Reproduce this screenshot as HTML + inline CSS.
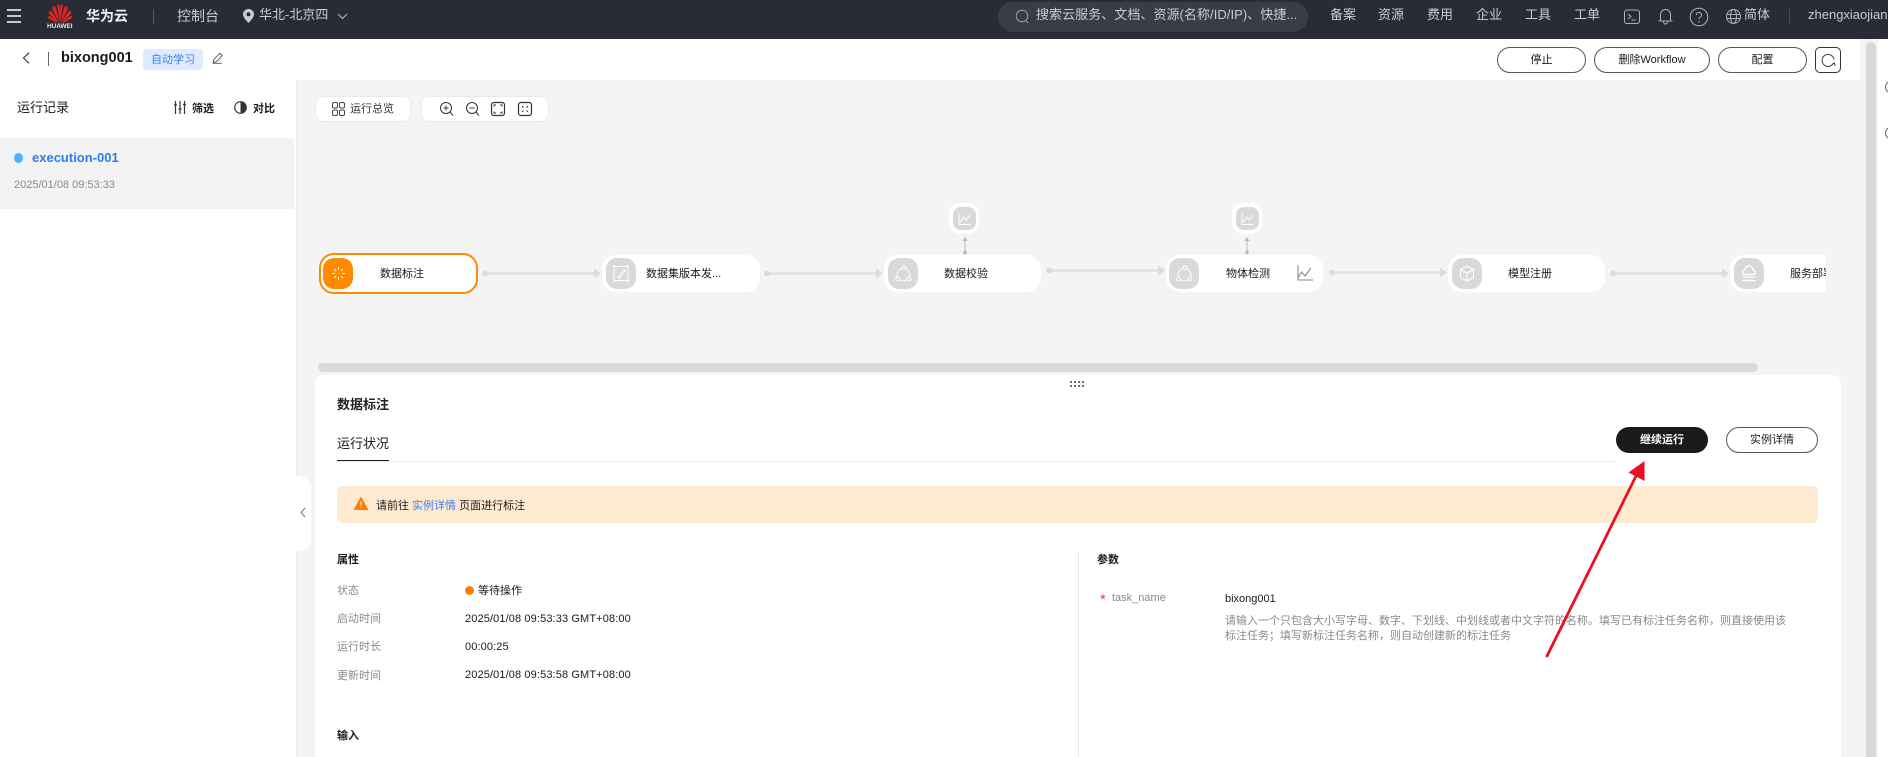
<!DOCTYPE html>
<html lang="zh-CN">
<head>
<meta charset="utf-8">
<title>bixong001</title>
<style>
*{box-sizing:border-box}
html,body{margin:0;padding:0;width:1888px;height:757px;overflow:hidden;background:#fff;font-family:"Liberation Sans","Noto Sans CJK SC",sans-serif;color:#1a1a1a}
.a{position:absolute}
.t{position:absolute;white-space:nowrap;line-height:16px;transform:translateY(-8px)}
.nav{font-size:13px;color:#c9ccd2;top:15px}
.btn{position:absolute;top:47px;height:26px;border:1px solid #555;border-radius:13px;background:#fff;font-size:11px;line-height:24px;text-align:center;color:#1a1a1a}
.tool{position:absolute;top:96px;height:26px;background:#fff;border:1px solid #eaeaea;border-radius:8px}
.node{position:absolute;top:255px;height:37px;width:158px;background:#fff;border-radius:14px}
.ic{position:absolute;top:258px;width:30px;height:31px;background:#d9d9d9;border-radius:11px}
.nt{font-size:11px;top:274px;color:#1a1a1a}
.lb{font-size:11px;color:#8a8a8a;left:337px}
.val{font-size:11px;color:#1a1a1a;left:465px;letter-spacing:.12px}
.h{font-size:11px;font-weight:bold;color:#1a1a1a}
</style>
</head>
<body>
<div class="a" style="left:0;top:0;width:1888px;height:757px;background:#fff"></div>

<!-- top bar -->
<div class="a" style="left:0;top:0;width:1888px;height:39px;background:#292c35"></div>
<div class="a" style="left:7px;top:9px;width:14px;height:2px;background:#c5c8ce"></div>
<div class="a" style="left:7px;top:15px;width:14px;height:2px;background:#c5c8ce"></div>
<div class="a" style="left:7px;top:21px;width:14px;height:2px;background:#c5c8ce"></div>
<svg class="a" style="left:47px;top:3px" width="26" height="22" viewBox="0 0 26 22">
<g fill="#e3231f">
<path d="M13 20 L10.2 3 Q11 1 12 1 Q13.5 6 13 20Z"/>
<path d="M13 20 L15.8 3 Q15 1 14 1 Q12.5 6 13 20Z"/>
<path d="M12 20 L5 5 Q6.5 3 8 3 Q11 10 12 20Z"/>
<path d="M14 20 L21 5 Q19.5 3 18 3 Q15 10 14 20Z"/>
<path d="M11 20 L1.5 10 Q2 8 3.5 7.5 Q8 12 11 20Z"/>
<path d="M15 20 L24.5 10 Q24 8 22.5 7.5 Q18 12 15 20Z"/>
<path d="M10.5 20.5 L1 15 Q1 13.5 1.5 12.5 Q7 15 10.5 20.5Z"/>
<path d="M15.5 20.5 L25 15 Q25 13.5 24.500 12.5 Q19 15 15.500 20.500Z"/>
</g></svg>
<div class="t" style="left:47px;top:27px;font-size:6.5px;line-height:8px;transform:translateY(-4px);color:#e8e8e8;font-weight:bold;letter-spacing:-.1px">HUAWEI</div>
<div class="t" style="left:86px;top:16px;font-size:14px;font-weight:bold;color:#f2f2f2">华为云</div>
<div class="a" style="left:153px;top:9px;width:1px;height:15px;background:#555963"></div>
<div class="t" style="left:177px;top:16px;font-size:14px;color:#c9ccd2">控制台</div>
<svg class="a" style="left:243px;top:9px" width="11" height="14" viewBox="0 0 11 14"><path d="M5.500 0C2.500 0 0 2.300 0 5.300 0 9 5.500 14 5.500 14S11 9 11 5.300C11 2.300 8.500 0 5.500 0Z" fill="#c9ccd2"/><circle cx="5.500" cy="5.200" r="2" fill="#292c35"/></svg>
<div class="t" style="left:259px;top:15px;font-size:13px;color:#c9ccd2">华北-北京四</div>
<svg class="a" style="left:337px;top:13px" width="11" height="7" viewBox="0 0 11 7"><path d="M1 1l4.500 4.500L10 1" fill="none" stroke="#b5b8be" stroke-width="1.100"/></svg>

<div class="a" style="left:998px;top:2px;width:310px;height:30px;border-radius:15px;background:#3a3d47"></div>
<svg class="a" style="left:1015px;top:9px" width="15" height="16" viewBox="0 0 15 16"><circle cx="7" cy="7" r="5.800" fill="none" stroke="#9da0a8" stroke-width="1"/><path d="M11 11.500l2 2.500" stroke="#9da0a8" stroke-width="1"/></svg>
<div class="t" style="left:1036px;top:15px;font-size:13px;color:#c9ccd2;letter-spacing:.05px;width:264px;overflow:hidden">搜索云服务、文档、资源(名称/ID/IP)、快捷...</div>
<div class="t nav" style="left:1330px">备案</div>
<div class="t nav" style="left:1378px">资源</div>
<div class="t nav" style="left:1427px">费用</div>
<div class="t nav" style="left:1476px">企业</div>
<div class="t nav" style="left:1525px">工具</div>
<div class="t nav" style="left:1574px">工单</div>
<svg class="a" style="left:1623px;top:8px" width="18" height="18" viewBox="0 0 18 18" fill="none" stroke="#aeb1b8" stroke-width="1"><rect x="1.500" y="2" width="15" height="13.500" rx="2.500"/><path d="M5 6l3 2.500-3 2.500M8.500 12h4"/></svg>
<svg class="a" style="left:1657px;top:7px" width="17" height="19" viewBox="0 0 17 19" fill="none" stroke="#aeb1b8" stroke-width="1"><path d="M3.500 14V7.500a5 5 0 0 1 10 0V14M1.500 14h14M6.500 14.500a2 2.500 0 0 0 4 0"/></svg>
<svg class="a" style="left:1689px;top:7px" width="20" height="20" viewBox="0 0 20 20" fill="none" stroke="#aeb1b8" stroke-width="1"><circle cx="10" cy="10" r="8.800"/><path d="M7.500 8a2.500 2.500 0 1 1 3.800 2c-1 .7-1.300 1.200-1.300 2.200M10 14v1.500"/></svg>
<svg class="a" style="left:1726px;top:9px" width="15" height="15" viewBox="0 0 15 15" fill="none" stroke="#aeb1b8" stroke-width="1"><circle cx="7.500" cy="7.500" r="7"/><ellipse cx="7.500" cy="7.500" rx="3" ry="7"/><path d="M1 5.500h13M1 9.500h13"/></svg>
<div class="t nav" style="left:1744px">简体</div>
<div class="a" style="left:1789px;top:9px;width:1px;height:15px;background:#454852"></div>
<div class="t nav" style="left:1808px">zhengxiaojian</div>

<!-- second bar -->
<div class="a" style="left:0;top:39px;width:1860px;height:41px;background:#fff"></div>
<svg class="a" style="left:21px;top:52px" width="10" height="12" viewBox="0 0 10 12"><path d="M8 .8L2.500 6 8 11.200" fill="none" stroke="#333" stroke-width="1.100"/></svg>
<div class="a" style="left:48px;top:52px;width:1px;height:14px;background:#666"></div>
<div class="t" style="left:61px;top:58px;font-size:14.500px;font-weight:bold;color:#1a1a1a">bixong001</div>
<div class="a" style="left:143px;top:49px;width:60px;height:21px;border-radius:4px;background:#deebfd"></div>
<div class="t" style="left:151px;top:59.500px;font-size:11px;color:#3d7fec">自动学习</div>
<svg class="a" style="left:212px;top:52px" width="12" height="12" viewBox="0 0 12 12" fill="none" stroke="#555" stroke-width=".9"><path d="M7.800 1.200l2.500 2.300-6 6.300-3.200.8.700-3.100zM.8 11.300h9"/></svg>

<div class="btn" style="left:1497px;width:89px">停止</div>
<div class="btn" style="left:1594px;width:116px">删除Workflow</div>
<div class="btn" style="left:1718px;width:89px">配置</div>
<div class="btn" style="left:1815px;width:26px;border-radius:5px;border-color:#333"></div>
<svg class="a" style="left:1821px;top:53px" width="15" height="15" viewBox="0 0 15 15" fill="none" stroke="#444" stroke-width="1"><path d="M12.500 10A6 6 0 1 1 13 6.500"/><path d="M11 11.500l2.500-1.500.5 2.800"/></svg>

<!-- main -->
<div class="a" style="left:296px;top:80px;width:1564px;height:677px;background:#f4f4f4"></div>
<div class="a" style="left:0;top:80px;width:296px;height:677px;background:#fff;box-shadow:1px 0 2px rgba(0,0,0,.05)"></div>
<div class="a" style="left:1860px;top:39px;width:18px;height:718px;background:#f4f4f4"></div>
<div class="a" style="left:1866px;top:42px;width:9.500px;height:715px;background:#d9d9d9;border-radius:5px 5px 0 0"></div>
<div class="a" style="left:1878px;top:39px;width:10px;height:718px;background:#fff"></div>
<div class="a" style="left:1885px;top:81px;width:10px;height:12px;border:1px solid #666;border-radius:50%"></div>
<div class="a" style="left:1885px;top:127px;width:10px;height:12px;border:1px solid #666;border-radius:50%"></div>

<!-- sidebar -->
<div class="t" style="left:17px;top:108px;font-size:13px;color:#1a1a1a">运行记录</div>
<svg class="a" style="left:174px;top:101px" width="12" height="13" viewBox="0 0 12 13" fill="none" stroke="#333" stroke-width="1.200"><path d="M1.500 0v13M6 0v13M10.500 0v13M0 4h3M4.500 8h3M9 3.500h3"/></svg>
<div class="t" style="left:192px;top:108.500px;font-size:11px;font-weight:bold">筛选</div>
<svg class="a" style="left:234px;top:101px" width="13" height="13" viewBox="0 0 13 13"><circle cx="6.500" cy="6.500" r="5.800" fill="none" stroke="#333" stroke-width="1.100"/><path d="M6.500 .7a5.800 5.800 0 0 1 0 11.600z" fill="#333"/></svg>
<div class="t" style="left:253px;top:108.500px;font-size:11px;font-weight:bold">对比</div>
<div class="a" style="left:0;top:138px;width:294px;height:71px;background:#f3f3f3"></div>
<div class="a" style="left:14px;top:153px;width:9px;height:10px;border-radius:50%;background:#4db1ff"></div>
<div class="t" style="left:32px;top:158px;font-size:13px;font-weight:bold;color:#2b7cf0">execution-001</div>
<div class="t" style="left:14px;top:185px;font-size:11px;color:#8a8a8a">2025/01/08 09:53:33</div>

<!-- toolbar -->
<div class="tool" style="left:315px;width:96px"></div>
<svg class="a" style="left:332px;top:102px" width="13" height="14" viewBox="0 0 13 14" fill="none" stroke="#444" stroke-width="1"><rect x=".5" y=".5" width="5" height="5.500" rx="1.500"/><rect x="7.500" y=".5" width="5" height="5.500" rx="1.500"/><rect x=".5" y="8" width="5" height="5.500" rx="1.500"/><rect x="7.500" y="8" width="5" height="5.500" rx="1.500"/></svg>
<div class="t" style="left:350px;top:108.500px;font-size:11px;color:#333">运行总览</div>
<div class="tool" style="left:421px;width:128px"></div>
<svg class="a" style="left:439px;top:101px" width="96" height="16" viewBox="0 0 96 16" fill="none" stroke="#333" stroke-width="1">
<circle cx="7" cy="7" r="5.500"/><path d="M11 11l3 3.500M7 4.500v5M4.500 7h5"/>
<circle cx="33" cy="7" r="5.500"/><path d="M37 11l3 3.500M30.500 7h5"/>
<rect x="52.500" y="1.500" width="13" height="13" rx="2.500" stroke-width="1.200"/><path d="M55 5.500V4h2M61 4h2v1.500M55 10.500V12h2M61 12h2v-1.500"/>
<rect x="79.500" y="1.500" width="13" height="13" rx="2.500" stroke-width="1.200"/><path d="M83 5l1.500 1.500M89 5l-1.500 1.500M83 11l1.500-1.500M89 11l-1.500-1.500"/>
</svg>

<!-- flow nodes -->
<div class="node" style="left:319px;top:253px;width:159px;height:41px;border:2px solid #ff8a00;border-radius:15px;box-shadow:inset 0 0 0 1px #fff"></div>
<div class="ic" style="left:323px;background:#ff8a00"></div>
<svg class="a" style="left:331px;top:266px" width="15" height="15" viewBox="0 0 15 15" stroke="#fff" stroke-width="1" fill="none"><path d="M7.500 1v3M7.500 11v3M1 7.500h3M11 7.500h3M3 3l2 2M10 10l2 2M12 3l-2 2M5 10l-2 2"/></svg>
<div class="t nt" style="left:380px">数据标注</div>

<div class="node" style="left:602px"></div>
<div class="ic" style="left:606px"></div>
<svg class="a" style="left:612px;top:264px" width="18" height="19" viewBox="0 0 18 19" fill="none" stroke="#fff" stroke-width="1"><rect x="2" y="2.500" width="14" height="14"/><path d="M6 13l6-7.500 1.500 1.200-6 7.500zM1 1.500h2M15 1.500h2M1 17.500h2M15 17.500h2"/></svg>
<div class="t nt" style="left:646px">数据集版本发...</div>

<div class="node" style="left:884px;width:157px"></div>
<div class="ic" style="left:888px"></div>
<svg class="a" style="left:894px;top:264px" width="18" height="19" viewBox="0 0 18 19" fill="none" stroke="#fff" stroke-width="1"><circle cx="10" cy="3.500" r="1.800"/><circle cx="3.500" cy="15" r="1.800"/><circle cx="15" cy="15" r="1.800"/><path d="M8.300 4.500A7.500 7.500 0 0 0 3 13.200M5.400 15.800A7.500 7.500 0 0 0 13.100 15.800M11.700 4.500A7.500 7.500 0 0 1 15.500 13.200"/></svg>
<div class="t nt" style="left:944px">数据校验</div>

<div class="node" style="left:1166px;width:157px"></div>
<div class="ic" style="left:1169px"></div>
<svg class="a" style="left:1175px;top:264px" width="18" height="19" viewBox="0 0 18 19" fill="none" stroke="#fff" stroke-width="1"><circle cx="10" cy="3.500" r="1.800"/><circle cx="3.500" cy="15" r="1.800"/><circle cx="15" cy="15" r="1.800"/><path d="M8.300 4.500A7.500 7.500 0 0 0 3 13.200M5.400 15.800A7.500 7.500 0 0 0 13.100 15.800M11.700 4.500A7.500 7.500 0 0 1 15.500 13.200"/></svg>
<div class="t nt" style="left:1226px">物体检测</div>
<svg class="a" style="left:1297px;top:265px" width="16" height="16" viewBox="0 0 16 16" fill="none" stroke="#888" stroke-width="1.100"><path d="M1 .5v14.500h15M1 13l3.500-6 3.500 4L14 3"/></svg>

<div class="node" style="left:1448px;width:157px"></div>
<div class="ic" style="left:1452px"></div>
<svg class="a" style="left:1458px;top:264px" width="18" height="19" viewBox="0 0 18 19" fill="none" stroke="#fff" stroke-width="1"><path d="M9 2l6.500 3.500v8L9 17l-6.500-3.500v-8zM2.500 5.500L9 9l6.500-3.500M9 9v8"/></svg>
<div class="t nt" style="left:1508px">模型注册</div>

<div class="a" style="left:1730px;top:255px;width:96px;height:37px;overflow:hidden">
<div class="a" style="left:0;top:0;width:158px;height:37px;background:#fff;border-radius:14px"></div>
<div class="a" style="left:4px;top:3px;width:30px;height:31px;background:#d9d9d9;border-radius:11px"></div>
<svg class="a" style="left:10px;top:9px" width="18" height="19" viewBox="0 0 18 19" fill="none" stroke="#fff" stroke-width="1"><path d="M4 10.500a2.500 2.500 0 0 1 1-4.800 4 4 0 0 1 8 .3 2.400 2.400 0 0 1 1 4.500zM2 13h14M2 16.500h14" stroke-width="1.200"/></svg>
<div class="t nt" style="left:60px;top:19px">服务部署</div>
</div>

<!-- connectors -->
<svg class="a" style="left:296px;top:195px" width="1564" height="100" viewBox="296 195 1564 100">
<g stroke="#e0e0e0" stroke-width="2.500" fill="#dcdcdc">
<path d="M485 273.500H596"/><circle cx="485" cy="273.500" r="3" stroke="none"/><path d="M594 268.500l7 5-7 5z" stroke="none"/>
<path d="M767 273.500H878"/><circle cx="767" cy="273.500" r="3" stroke="none"/><path d="M876 268.500l7 5-7 5z" stroke="none"/>
<path d="M1049 270.500H1160"/><circle cx="1049" cy="270.500" r="3" stroke="none"/><path d="M1158 265.500l7 5-7 5z" stroke="none"/>
<path d="M1332 272.500H1442"/><circle cx="1332" cy="272.500" r="3" stroke="none"/><path d="M1440 267.500l7 5-7 5z" stroke="none"/>
<path d="M1613 273.500H1724"/><circle cx="1613" cy="273.500" r="3" stroke="none"/><path d="M1722 268.500l7 5-7 5z" stroke="none"/>
</g>
<g stroke="#c4c6cc" stroke-width="1.300" fill="#b5b7be">
<path d="M965 240V253"/><path d="M965 237l-2.500 4h5z" stroke="none"/><circle cx="965" cy="252.500" r="1.800" stroke="none"/>
<path d="M1247 240V253"/><path d="M1247 237l-2.500 4h5z" stroke="none"/><circle cx="1247" cy="252.500" r="1.800" stroke="none"/>
</g>
</svg>

<!-- small nodes -->
<div class="a" style="left:949px;top:203px;width:30px;height:31px;background:#fff;border-radius:11px"></div>
<div class="a" style="left:953px;top:207px;width:23px;height:23px;background:#d9d9d9;border-radius:8px"></div>
<svg class="a" style="left:958px;top:212px" width="14" height="14" viewBox="0 0 14 14" fill="none" stroke="#fff" stroke-width="1"><path d="M1 1v11.500h12M2.500 10l3-5 2.500 3 4-5"/></svg>
<div class="a" style="left:1232px;top:203px;width:30px;height:31px;background:#fff;border-radius:11px"></div>
<div class="a" style="left:1236px;top:207px;width:23px;height:23px;background:#d9d9d9;border-radius:8px"></div>
<svg class="a" style="left:1241px;top:212px" width="14" height="14" viewBox="0 0 14 14" fill="none" stroke="#fff" stroke-width="1"><path d="M1 1v11.500h12M2.500 10l3-5 2.500 3 4-5"/></svg>

<!-- h scrollbar -->
<div class="a" style="left:318px;top:363px;width:1440px;height:9px;background:#d9d9d9;border-radius:5px"></div>

<!-- panel -->
<div class="a" style="left:315px;top:375px;width:1526px;height:382px;background:#fff;border-radius:8px 8px 0 0"></div>
<svg class="a" style="left:1070px;top:381px" width="15" height="7"><g fill="#6b6e76"><rect x="0" y="0" width="2" height="2"/><rect x="4" y="0" width="2" height="2"/><rect x="8" y="0" width="2" height="2"/><rect x="12" y="0" width="2" height="2"/><rect x="0" y="4" width="2" height="2"/><rect x="4" y="4" width="2" height="2"/><rect x="8" y="4" width="2" height="2"/><rect x="12" y="4" width="2" height="2"/></g></svg>
<div class="a" style="left:296px;top:476px;width:15px;height:75px;background:#fff;border-radius:0 12px 12px 0"></div>
<svg class="a" style="left:299px;top:507px" width="8" height="11" viewBox="0 0 8 11"><path d="M6 1L2 5.500 6 10" fill="none" stroke="#777" stroke-width="1"/></svg>

<div class="t" style="left:337px;top:405px;font-size:13px;font-weight:bold;color:#222">数据标注</div>
<div class="t" style="left:337px;top:444px;font-size:13px;color:#1a1a1a">运行状况</div>
<div class="a" style="left:337px;top:461px;width:1279px;height:1px;background:#ececec"></div>
<div class="a" style="left:337px;top:459.500px;width:52px;height:1.500px;background:#1a1a1a"></div>

<div class="a" style="left:1616px;top:427px;width:92px;height:26px;border-radius:13px;background:#1a1a1a;color:#fff;font-size:11px;font-weight:bold;line-height:26px;text-align:center">继续运行</div>
<div class="a" style="left:1726px;top:427px;width:92px;height:26px;border-radius:13px;background:#fff;border:1px solid #555;font-size:11px;line-height:24px;text-align:center">实例详情</div>

<div class="a" style="left:337px;top:486px;width:1481px;height:37px;border-radius:6px;background:#fdead1"></div>
<svg class="a" style="left:354px;top:497px" width="14" height="13" viewBox="0 0 14 13"><path d="M7 .5L13.700 12.500H.3z" fill="#ff7d00" stroke="#ff7d00" stroke-linejoin="round"/><path d="M7 4.500v4M7 9.500v1.300" stroke="#fff" stroke-width="1.100"/></svg>
<div class="t" style="left:376px;top:506px;font-size:11px;color:#1a1a1a">请前往 <span style="color:#3d7fec">实例详情</span> 页面进行标注</div>

<div class="t h" style="left:337px;top:560px">属性</div>
<div class="t lb" style="top:591px">状态</div>
<div class="a" style="left:465px;top:586px;width:9px;height:9px;border-radius:50%;background:#ff8000"></div>
<div class="t" style="left:478px;top:591px;font-size:11px">等待操作</div>
<div class="t lb" style="top:619px">启动时间</div>
<div class="t val" style="top:619px">2025/01/08 09:53:33 GMT+08:00</div>
<div class="t lb" style="top:647px">运行时长</div>
<div class="t val" style="top:647px">00:00:25</div>
<div class="t lb" style="top:676px">更新时间</div>
<div class="t val" style="top:675px">2025/01/08 09:53:58 GMT+08:00</div>
<div class="t h" style="left:337px;top:736px">输入</div>

<div class="a" style="left:1078px;top:551px;width:1px;height:206px;background:#ececec"></div>
<div class="t h" style="left:1097px;top:560px">参数</div>
<div class="t" style="left:1100px;top:600px;font-size:15px;color:#e8453c">*</div>
<div class="t" style="left:1112px;top:597.500px;font-size:11px;color:#8a8a8a">task_name</div>
<div class="t" style="left:1225px;top:598.500px;font-size:11px">bixong001</div>
<div class="t" style="left:1225px;top:621px;font-size:11px;color:#8a8a8a">请输入一个只包含大小写字母、数字、下划线、中划线或者中文字符的名称。填写已有标注任务名称&#65292;则直接使用该</div>
<div class="t" style="left:1225px;top:636px;font-size:11px;color:#8a8a8a">标注任务&#65307;填写新标注任务名称&#65292;则自动创建新的标注任务</div>

<!-- red arrow -->
<svg class="a" style="left:1530px;top:450px" width="130" height="215" viewBox="1530 450 130 215">
<path d="M1546.500 657L1636 476" stroke="#e81123" stroke-width="2.800" fill="none"/>
<path d="M1644.500 461L1628.500 472.500 1644.500 481z" fill="#e81123"/>
</svg>
</body>
</html>
